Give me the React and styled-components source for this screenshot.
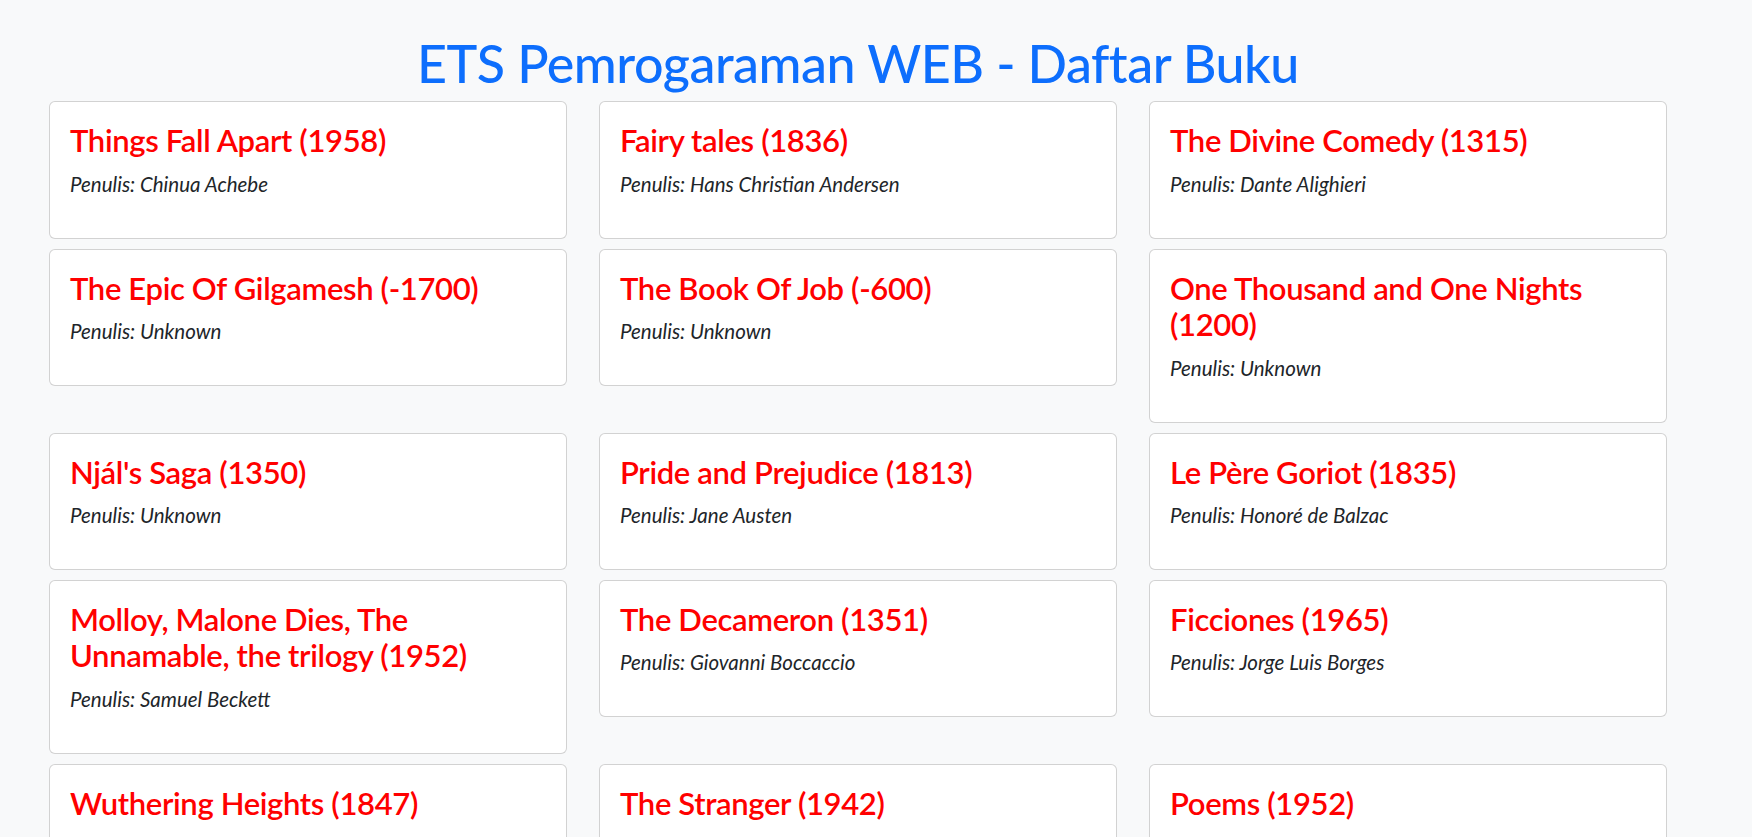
import React from 'react'
import styled, { createGlobalStyle } from 'styled-components'

const GlobalStyle = createGlobalStyle`
  * { box-sizing: border-box; }
  body {
    margin: 0;
    background: #f8f9fa;
    color: #212529;
    font-family: Lato, "Open Sans", sans-serif;
  }
`

const books = [
  { title: 'Things Fall Apart', year: 1958, author: 'Chinua Achebe' },
  { title: 'Fairy tales', year: 1836, author: 'Hans Christian Andersen' },
  { title: 'The Divine Comedy', year: 1315, author: 'Dante Alighieri' },
  { title: 'The Epic Of Gilgamesh', year: -1700, author: 'Unknown' },
  { title: 'The Book Of Job', year: -600, author: 'Unknown' },
  { title: 'One Thousand and One Nights', year: 1200, author: 'Unknown' },
  { title: "Njál's Saga", year: 1350, author: 'Unknown' },
  { title: 'Pride and Prejudice', year: 1813, author: 'Jane Austen' },
  { title: 'Le Père Goriot', year: 1835, author: 'Honoré de Balzac' },
  { title: 'Molloy, Malone Dies, The Unnamable, the trilogy', year: 1952, author: 'Samuel Beckett' },
  { title: 'The Decameron', year: 1351, author: 'Giovanni Boccaccio' },
  { title: 'Ficciones', year: 1965, author: 'Jorge Luis Borges' },
  { title: 'Wuthering Heights', year: 1847, author: 'Emily Brontë' },
  { title: 'The Stranger', year: 1942, author: 'Albert Camus' },
  { title: 'Poems', year: 1952, author: 'Paul Celan' },
  { title: 'Journey to the End of the Night', year: 1932, author: 'Louis-Ferdinand Céline' },
  { title: 'Don Quijote De La Mancha', year: 1610, author: 'Miguel de Cervantes' },
  { title: 'The Canterbury Tales', year: 1450, author: 'Geoffrey Chaucer' },
]

const App = () => {
  return (
    <>
      <GlobalStyle />
      <Page>
        <Heading>ETS Pemrogaraman WEB - Daftar Buku</Heading>
        <BookGrid>
          {books.map((b) => (
            <Card key={b.title}>
              <CardTitle>{`${b.title} (${b.year})`}</CardTitle>
              <Author>{`Penulis: ${b.author}`}</Author>
            </Card>
          ))}
        </BookGrid>
      </Page>
    </>
  )
}

const Page = styled.div`
  width: 1667px;
  padding: 32px 0 40px 49px;
`

const Heading = styled.h1`
  margin: 0 0 7px;
  text-align: center;
  font-size: 52px;
  letter-spacing: -0.5px;
  line-height: 1.2;
  font-weight: 500;
  color: #0d6efd;
`

const BookGrid = styled.div`
  display: grid;
  grid-template-columns: repeat(3, 1fr);
  column-gap: 32px;
  row-gap: 10px;
  align-items: start;
`

const Card = styled.div`
  background: #fff;
  border: 1px solid rgba(0, 0, 0, 0.175);
  border-radius: 6px;
  padding: 20px 20px 39px;
`

const CardTitle = styled.h2`
  margin: 0 0 10px;
  font-size: 31px;
  letter-spacing: -0.35px;
  line-height: 36.4px;
  font-weight: 600;
  color: #ff0000;
`

const Author = styled.p`
  margin: 0;
  font-size: 20.5px;
  line-height: 30px;
  font-weight: 400;
  font-style: italic;
  color: #212529;
`

export default App
